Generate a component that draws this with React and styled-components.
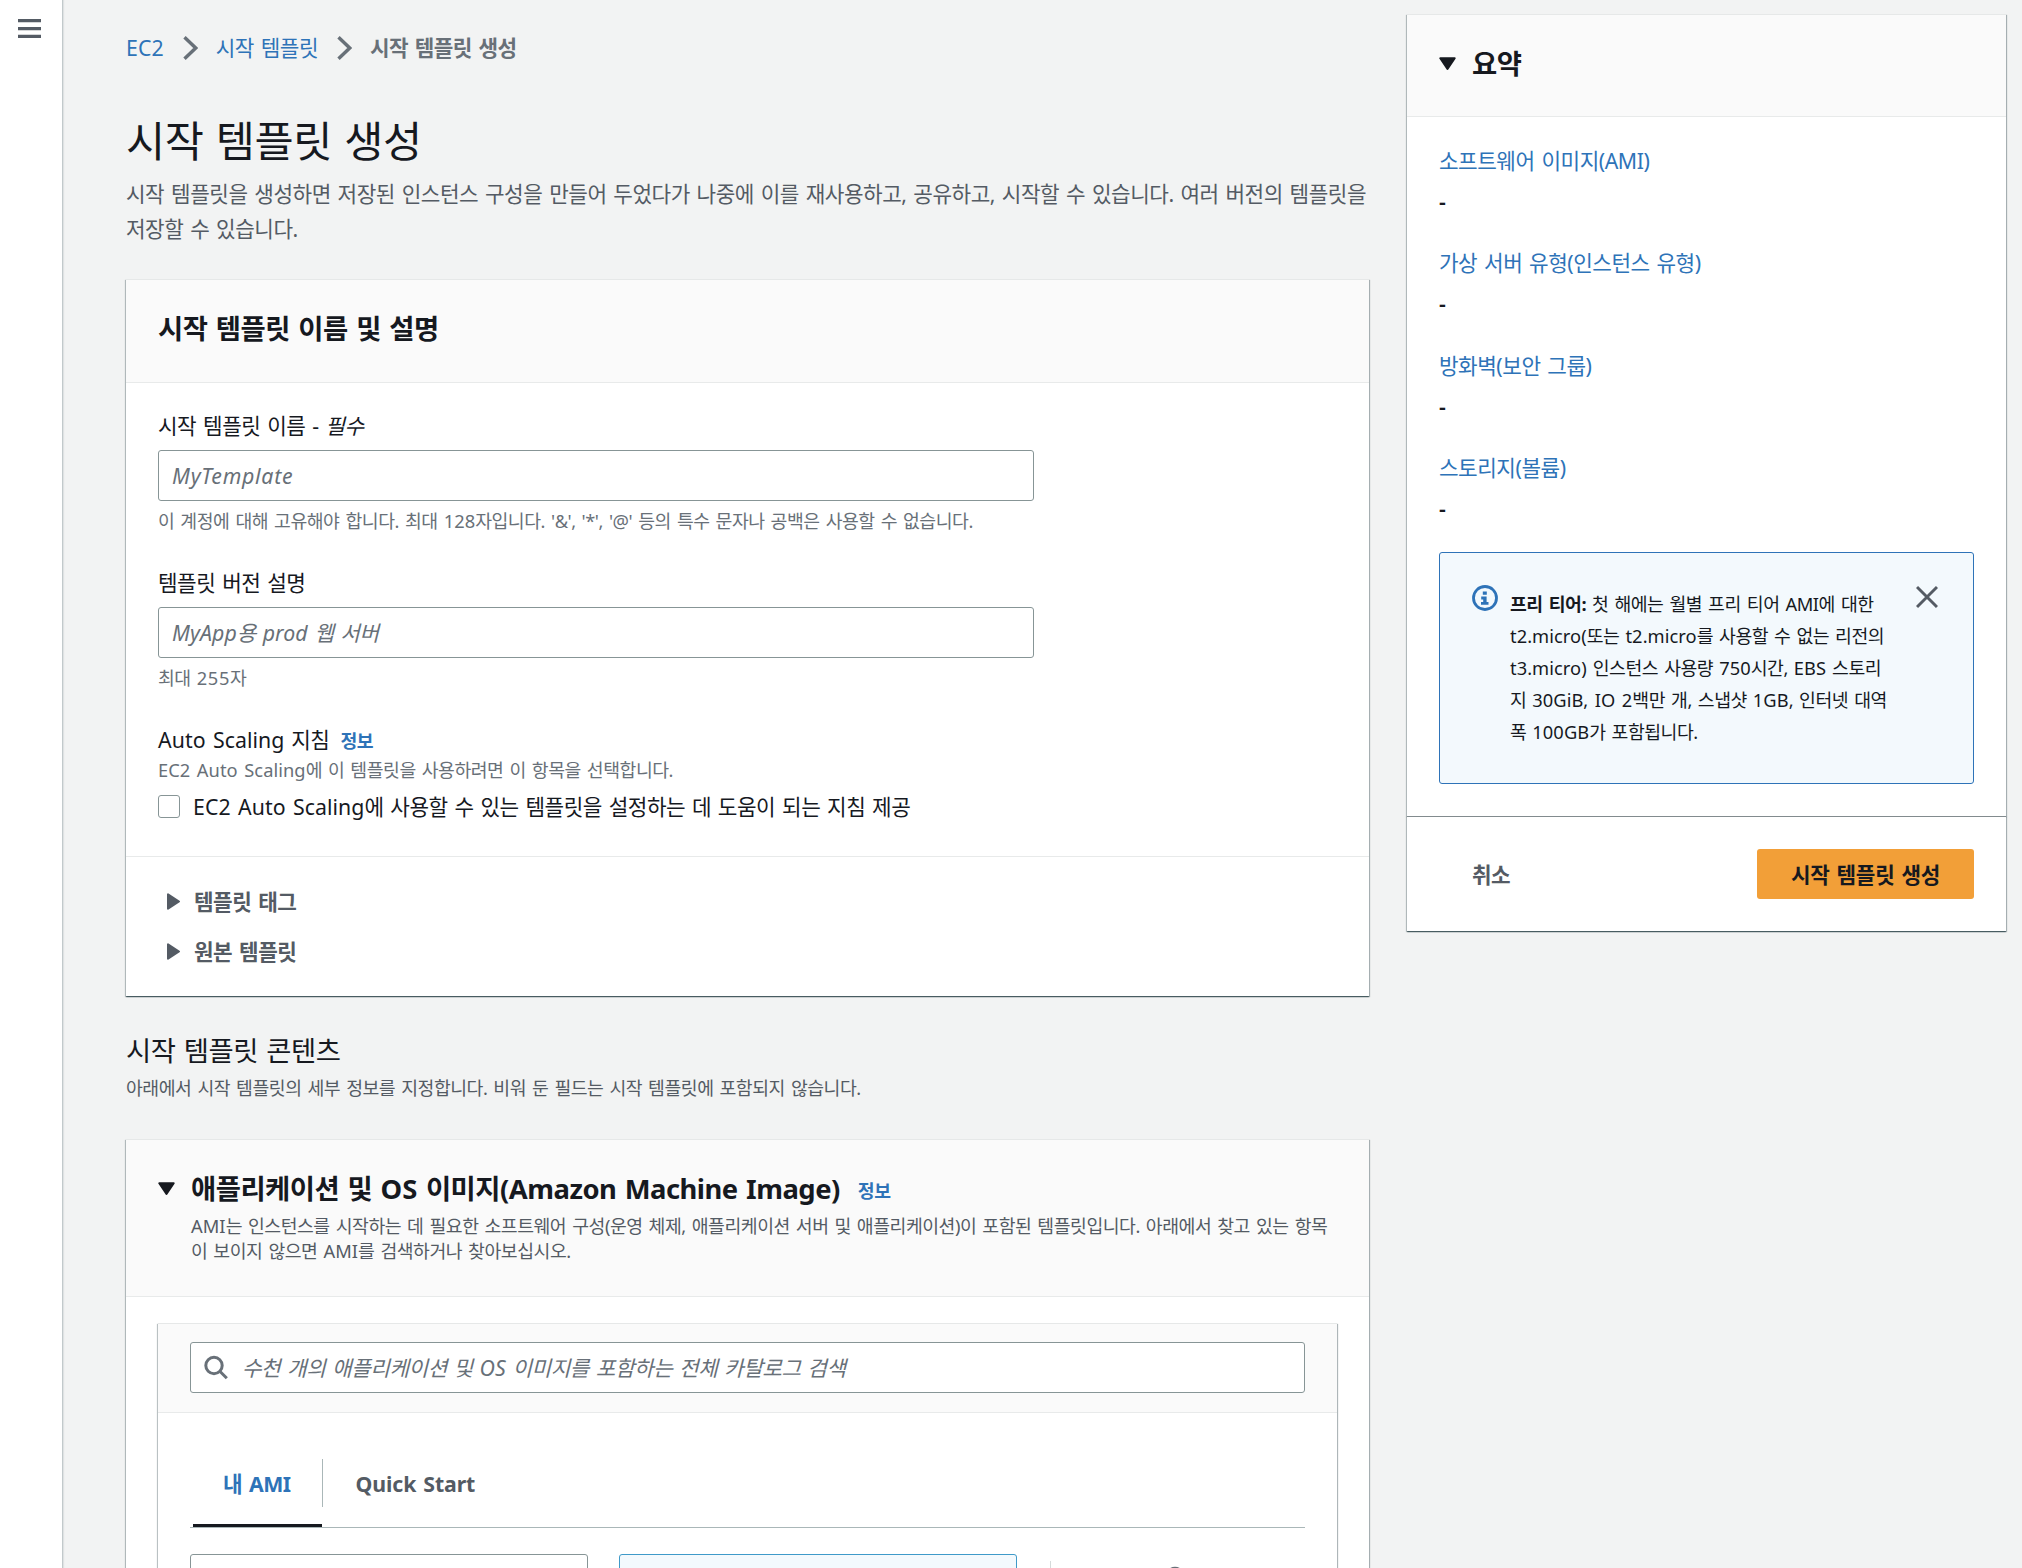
import styled, { createGlobalStyle } from 'styled-components';

const GlobalStyle = createGlobalStyle`
  * {
    box-sizing: border-box;
  }

  body {
    margin: 0;
    background: #f2f3f3;
    color: #16191f;
    font-family: "Noto Sans", "Noto Sans CJK KR", sans-serif;
    font-size: 21.3px;
    line-height: 35px;
    letter-spacing: -0.022em;
    word-spacing: 0.08em;
    white-space: nowrap;
  }

  h1, h2, p {
    margin: 0;
  }
`

const Page = styled.div`
  display: flex;
  align-items: flex-start;
  width: 2022px;
  height: 1568px;
  overflow: hidden;
`

const Rail = styled.nav`
  flex: none;
  width: 63px;
  height: 1568px;
  padding: 19px 0 0 18px;
  background: #fff;
  border-right: 1px solid #c2c9cb;
  box-shadow: 1px 0 1px rgba(0, 28, 36, 0.08);

  svg {
    display: block;
  }
`

const Main = styled.main`
  flex: none;
  width: 1243px;
  margin-left: 63px;
  padding-top: 30px;
`

// hangul is set tighter than latin, so latin runs get their own tracking
const Latin = styled.span`
  letter-spacing: ${props => (props.$italic ? '0.035em' : '0.003em')};
`

const Breadcrumbs = styled.nav`
  display: flex;
  align-items: center;
  height: 35px;

  svg {
    margin: 0 18px 0 19px;
  }
`

const Link = styled.a`
  color: #2e73b8;
`

const Current = styled.span`
  color: #687078;
  font-weight: 700;
  letter-spacing: -0.027em;
`

const Title = styled.h1`
  margin-top: 46px;
  font-size: 42.6px;
  font-weight: 400;
  line-height: 58px;
`

const Lead = styled.p`
  margin-top: 7px;
  color: #545b64;
`

const Card = styled.section`
  margin-top: ${props => props.$top || 0}px;
  background: #fff;
  border-top: 1px solid #e6e8e8;
  box-shadow: 0 1px 1px rgba(0, 28, 36, 0.5), 1px 1px 1px rgba(0, 28, 36, 0.25), -1px 1px 1px rgba(0, 28, 36, 0.2);
`

const CardHeader = styled.header`
  display: flex;
  height: ${props => props.$height}px;
  padding: ${props => props.$padding || '31px 32px 0'};
  background: #fafafa;
  border-bottom: 1px solid #e8eaea;
`

const Heading = styled.h2`
  font-size: 27.4px;
  font-weight: ${props => (props.$light ? 400 : 700)};
  letter-spacing: ${props => (props.$wide ? '-0.018em' : 'inherit')};
  line-height: 35px;
`

const Info = styled.a`
  margin-left: ${props => props.$gap}px;
  padding-top: ${props => props.$drop || 0}px;
  color: #2e73b8;
  font-size: 18.3px;
  font-weight: 700;
`

const Small = styled.p`
  margin-top: ${props => props.$top || 0}px;
  color: ${props => props.$color || '#687078'};
  font-size: 18.3px;
  line-height: 25.6px;
`

const Form = styled.div`
  height: 474px;
  padding: 25px 32px 0;
  border-bottom: 1px solid #e8eaea;
`

const Field = styled.div`
  height: 157px;
`

const Label = styled.div`
  height: 42px;
`

const Input = styled.div`
  display: flex;
  align-items: center;
  width: ${props => props.$width || '876px'};
  height: 51px;
  margin-bottom: 7px;
  padding-left: 13px;
  background: #fff;
  border: 1px solid #879596;
  border-radius: 3px;
  color: #687078;
  font-style: italic;

  svg {
    margin-right: 13px;
  }
`

const CheckRow = styled.label`
  display: flex;
  align-items: center;
  height: 35px;
  margin-top: 6px;
`

const Checkbox = styled.span`
  width: 22px;
  height: 23px;
  margin-right: 13px;
  border: 1px solid #879596;
  border-radius: 3px;
`

const Expanders = styled.div`
  height: 139px;
  padding: 19px 0 0 41px;
`

const Expander = styled.div`
  display: flex;
  align-items: center;
  height: 50px;
  color: #545b64;
  font-weight: 700;

  svg {
    margin-right: 14px;
  }
`

const SectionIntro = styled.div`
  margin-top: 37px;
`

const AmiBody = styled.div`
  padding: 26px 32px 0;
`

const AmiText = styled.div`
  margin-left: 16px;
`

const AmiTitle = styled.div`
  display: flex;
  height: 35px;
`

const InnerCard = styled(Card)`
  height: 300px;
`

const Catalog = styled.div`
  padding: 0 32px;
`

const Tabs = styled.div`
  display: flex;
  height: 115px;
  padding: 46px 0 0 3px;
  border-bottom: 1px solid #aab7b8;
`

const Tab = styled.div`
  height: 68px;
  padding: ${props => (props.$active ? '7px 31px 0 30px' : '7px 33px 0')};
  color: ${props => (props.$active ? '#2e73b8' : '#545b64')};
  border-bottom: 3px solid ${props => (props.$active ? '#16191f' : 'transparent')};
  font-weight: 700;
  letter-spacing: ${props => (props.$active ? 'inherit' : '-0.006em')};
`

const TabDivider = styled.span`
  width: 1px;
  height: 48px;
  background: #aab7b8;
`

const Options = styled.div`
  display: flex;
  margin-top: 26px;
`

const Option = styled.div`
  width: 398px;
  height: 60px;
  margin-right: ${props => (props.$selected ? 33 : 31)}px;
  background: ${props => (props.$selected ? '#f3f9fd' : '#fff')};
  border: 1px solid ${props => (props.$selected ? '#3f9ac9' : '#879596')};
  border-radius: 3px;
`

const Browse = styled.div`
  display: flex;
  justify-content: center;
  width: 254px;
  height: 60px;
  margin-top: 7px;
  padding-top: 5px;
  border-left: 1px solid #d5dbdb;
`

const Aside = styled.aside`
  flex: none;
  width: 599px;
  margin: 14px 0 0 38px;
`

const Details = styled.div`
  height: 699px;
  padding: 26px 32px 0;
`

const Item = styled.div`
  height: 102.4px;

  p {
    margin-top: 6px;
    font-weight: 600;
  }
`

const Notice = styled.div`
  display: flex;
  align-items: flex-start;
  height: 232px;
  margin-top: -1px;
  padding: 32px 35px 0 32px;
  background: #f3f9fd;
  border: 1px solid #2e73b8;
  border-radius: 3px;
`

const NoticeText = styled.p`
  flex: 1;
  padding-top: 3px;
  padding-left: 12px;
  font-size: 18.3px;
  line-height: 32.1px;
`

const Actions = styled(Card)`
  display: flex;
  align-items: center;
  justify-content: space-between;
  height: 115px;
  padding: 0 32px 0 65px;
  border-top-color: #828b8e;
`

const Cancel = styled.span`
  color: #545b64;
  font-weight: 700;
`

const Submit = styled.button`
  width: 217px;
  height: 50px;
  padding: 0;
  border: none;
  border-radius: 3px;
  background: #f29f38;
  color: #16191f;
  font: inherit;
  font-weight: 700;
  letter-spacing: -0.014em;
  word-spacing: inherit;
`

const MenuIcon = () => (
  <svg width="23" height="20" viewBox="0 0 23 20" stroke="#545b64" strokeWidth="3.2">
    <path d="M0 1.7h23M0 9.7h23M0 17.4h23" />
  </svg>
)

const Chevron = () => (
  <svg width="15" height="24" viewBox="0 0 15 24" fill="none" stroke="#687078" strokeWidth="3.4">
    <path d="M1.5 1.3L12.7 12 1.5 22.7" />
  </svg>
)

const Caret = () => (
  <svg width="17" height="35" viewBox="0 0 17 35" fill="#16191f" stroke="#16191f" strokeWidth="2" strokeLinejoin="round">
    <path d="M1.3 12.3h14.4L8.5 23z" />
  </svg>
)

const CaretRight = () => (
  <svg width="13" height="17" viewBox="0 0 13 17" fill="#545b64" stroke="#545b64" strokeWidth="2" strokeLinejoin="round">
    <path d="M1 1.3v14.4l11-7.2z" />
  </svg>
)

const SearchIcon = () => (
  <svg width="25" height="25" viewBox="0 0 25 25" fill="none" stroke="#687078" strokeWidth="3">
    <circle cx="10" cy="10.5" r="8.2" />
    <path d="M15.8 16.3l7 7" />
  </svg>
)

const InfoIcon = () => (
  <svg width="26" height="26" viewBox="0 0 26 26" fill="#2e73b8">
    <circle cx="13" cy="13" r="11.5" fill="none" stroke="#2e73b8" strokeWidth="2.8" />
    <path d="M10.8 6.6h4v3.2h-4zM9.2 11.6h5.4v5.3h1.9v2.8H9v-2.8h2.2v-2.5h-2z" />
  </svg>
)

const CloseIcon = () => (
  <svg width="22" height="24" viewBox="0 0 22 24" fill="none" stroke="#545b64" strokeWidth="3">
    <path d="M1 2l20 20M21 2L1 22" />
  </svg>
)

const summary = [
  '소프트웨어 이미지(AMI)',
  '가상 서버 유형(인스턴스 유형)',
  '방화벽(보안 그룹)',
  '스토리지(볼륨)',
]

const App = () => (
  <Page>
    <GlobalStyle />
    <Rail><MenuIcon /></Rail>

    <Main>
      <Breadcrumbs>
        <Link><Latin>EC2</Latin></Link>
        <Chevron />
        <Link>시작 템플릿</Link>
        <Chevron />
        <Current>시작 템플릿 생성</Current>
      </Breadcrumbs>
      <Title>시작 템플릿 생성</Title>
      <Lead>
        시작 템플릿을 생성하면 저장된 인스턴스 구성을 만들어 두었다가 나중에 이를 재사용하고, 공유하고, 시작할 수 있습니다. 여러 버전의 템플릿을
        <br />
        저장할 수 있습니다.
      </Lead>

      <Card $top={33}>
        <CardHeader $height={103}>
          <Heading>시작 템플릿 이름 및 설명</Heading>
        </CardHeader>
        <Form>
          <Field>
            <Label>시작 템플릿 이름 - <em>필수</em></Label>
            <Input><Latin $italic>MyTemplate</Latin></Input>
            <Small>이 계정에 대해 고유해야 합니다. 최대 <Latin>128</Latin>자입니다. {`'&', '*', '@'`} 등의 특수 문자나 공백은 사용할 수 없습니다.</Small>
          </Field>
          <Field>
            <Label>템플릿 버전 설명</Label>
            <Input><div><Latin>MyApp</Latin>용 <Latin>prod</Latin> 웹 서버</div></Input>
            <Small>최대 <Latin $italic>255</Latin>자</Small>
          </Field>
          <div><Latin>Auto Scaling</Latin> 지침<Info $gap={11}>정보</Info></div>
          <Small $top={-1}><Latin>EC2 Auto Scaling</Latin>에 이 템플릿을 사용하려면 이 항목을 선택합니다.</Small>
          <CheckRow>
            <Checkbox />
            <div><Latin>EC2 Auto Scaling</Latin>에 사용할 수 있는 템플릿을 설정하는 데 도움이 되는 지침 제공</div>
          </CheckRow>
        </Form>
        <Expanders>
          <Expander><CaretRight />템플릿 태그</Expander>
          <Expander><CaretRight />원본 템플릿</Expander>
        </Expanders>
      </Card>

      <SectionIntro>
        <Heading $light>시작 템플릿 콘텐츠</Heading>
        <Small $top={7} $color="#545b64">아래에서 시작 템플릿의 세부 정보를 지정합니다. 비워 둔 필드는 시작 템플릿에 포함되지 않습니다.</Small>
      </SectionIntro>

      <Card $top={38}>
        <CardHeader $height={157}>
          <Caret />
          <AmiText>
            <AmiTitle>
              <Heading $wide>애플리케이션 및 <Latin>OS</Latin> 이미지(Amazon Machine Image)</Heading>
              <Info $gap={18} $drop={2}>정보</Info>
            </AmiTitle>
            <Small $top={7} $color="#545b64">
              <Latin>AMI</Latin>는 인스턴스를 시작하는 데 필요한 소프트웨어 구성(운영 체제, 애플리케이션 서버 및 애플리케이션)이 포함된 템플릿입니다. 아래에서 찾고 있는 항목
              <br />
              이 보이지 않으면 <Latin>AMI</Latin>를 검색하거나 찾아보십시오.
            </Small>
          </AmiText>
        </CardHeader>
        <AmiBody>
          <InnerCard>
            <CardHeader $height={89} $padding="18px 32px 0">
              <Input $width="100%">
                <SearchIcon />
                <div>수천 개의 애플리케이션 및 <Latin>OS</Latin> 이미지를 포함하는 전체 카탈로그 검색</div>
              </Input>
            </CardHeader>
            <Catalog>
              <Tabs>
                <Tab $active>내 AMI</Tab>
                <TabDivider />
                <Tab>Quick Start</Tab>
              </Tabs>
              <Options>
                <Option />
                <Option $selected />
                <Browse><SearchIcon /></Browse>
              </Options>
            </Catalog>
          </InnerCard>
        </AmiBody>
      </Card>
    </Main>

    <Aside>
      <Card>
        <CardHeader $height={102}>
          <Caret />
          <AmiText><Heading>요약</Heading></AmiText>
        </CardHeader>
        <Details>
          {summary.map(name => (
            <Item key={name}>
              <Link>{name}</Link>
              <p>-</p>
            </Item>
          ))}
          <Notice>
            <InfoIcon />
            <NoticeText>
              <b>프리 티어:</b> 첫 해에는 월별 프리 티어 AMI에 대한<br />
              <Latin>t2.micro(</Latin>또는 <Latin>t2.micro</Latin>를 사용할 수 없는 리전의<br />
              <Latin>t3.micro)</Latin> 인스턴스 사용량 <Latin>750</Latin>시간, <Latin>EBS</Latin> 스토리<br />
              지 <Latin>30GiB, IO 2</Latin>백만 개, 스냅샷 <Latin>1GB</Latin>, 인터넷 대역<br />
              폭 <Latin>100GB</Latin>가 포함됩니다.
            </NoticeText>
            <CloseIcon />
          </Notice>
        </Details>
      </Card>
      <Actions>
        <Cancel>취소</Cancel>
        <Submit>시작 템플릿 생성</Submit>
      </Actions>
    </Aside>
  </Page>
)

export default App;
